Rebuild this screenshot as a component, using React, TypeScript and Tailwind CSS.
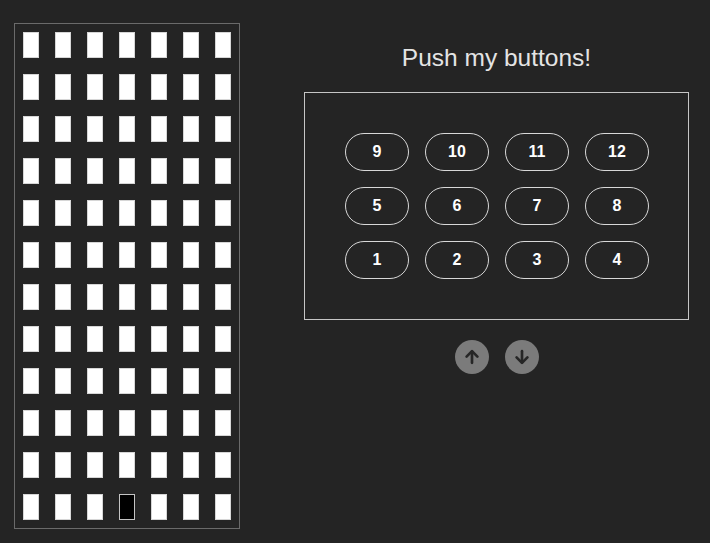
import React from "react";

const ROWS = 12;
const COLS = 7;
// the lit window: bottom row, fourth column
const active = { row: 11, col: 3 };

const floors = [
  [9, 10, 11, 12],
  [5, 6, 7, 8],
  [1, 2, 3, 4],
];

const Arrow = ({ down }: { down?: boolean }) => (
  <svg width="20" height="20" viewBox="0 0 24 24" fill="none" stroke="#262626" strokeWidth="3.2" strokeLinecap="round" strokeLinejoin="round" className={down ? "rotate-180" : ""}>
    <path d="M12 19V5.5" />
    <path d="M5.5 11.5 12 5l6.5 6.5" />
  </svg>
);

const App = () => {
  return (
    <div className="min-h-screen w-full bg-[#242424] flex items-start pt-[23px] pl-[14px]" style={{ fontFamily: '"Liberation Sans", Arial, sans-serif' }}>
      <div className="border border-[#6a6a6a] p-2 grid grid-cols-7 gap-4">
        {Array.from({ length: ROWS * COLS }).map((_, i) => {
          const row = Math.floor(i / COLS);
          const col = i % COLS;
          const lit = row === active.row && col === active.col;
          return (
            <div
              key={i}
              className={lit ? "w-4 h-[26px] bg-black border border-[#c4c4c4]" : "w-4 h-[26px] bg-white border border-[#d6d6d6]"}
            />
          );
        })}
      </div>

      <div className="ml-[64px] w-[385px] flex flex-col items-center">
        <h1 className="mt-[21px] text-[24.5px] leading-[28px] text-[#e4e4e4]">Push my buttons!</h1>

        <div className="mt-5 w-full border border-[#c6c6c6] pt-10 pb-10 pl-10 pr-[39px] grid grid-cols-4 gap-4">
          {floors.flat().map(n => (
            <button
              key={n}
              className="w-16 h-[38px] rounded-full border border-[#d8d8d8] text-white font-bold text-[16px] flex items-center justify-center"
            >
              {n}
            </button>
          ))}
        </div>

        <div className="mt-5 flex gap-4">
          <button className="w-[34px] h-[34px] rounded-full bg-[#7b7b7b] flex items-center justify-center">
            <Arrow />
          </button>
          <button className="w-[34px] h-[34px] rounded-full bg-[#7b7b7b] flex items-center justify-center">
            <Arrow down />
          </button>
        </div>
      </div>
    </div>
  );
};

export default App;
